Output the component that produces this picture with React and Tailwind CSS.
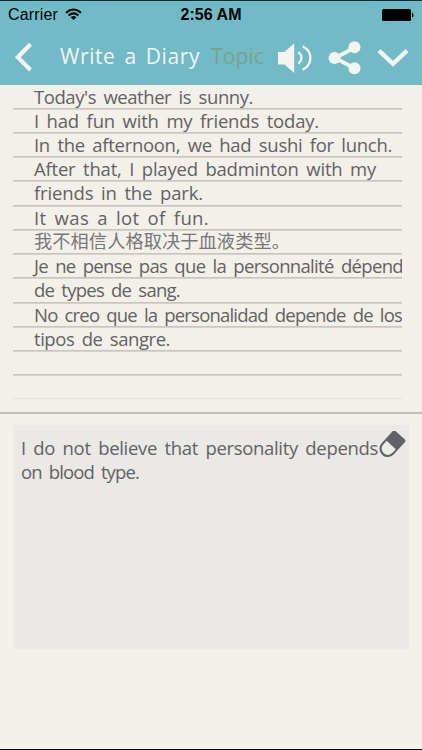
import { useLayoutEffect, useRef, useState } from "react";

// Spreads a line of handwriting over a given width by adjusting its tracking.
function Fit({ text, width, className = "" }) {
  const ref = useRef(null);
  const [spacing, setSpacing] = useState(0);
  useLayoutEffect(() => {
    const natural = ref.current.getBoundingClientRect().width;
    setSpacing((width - natural) / text.length);
  }, [text, width]);
  return (
    <span
      ref={ref}
      className={`inline-block whitespace-pre ${className}`}
      style={{ letterSpacing: `${spacing}px` }}
    >
      {text}
    </span>
  );
}

const diary = [
  ["Today's weather is sunny.", 219],
  ["I had fun with my friends today.", 285],
  ["In the afternoon, we had sushi for lunch.", 358],
  ["After that, I played badminton with my", 342],
  ["friends in the park.", 169],
  ["It was a lot of fun.", 175],
  ["我不相信人格取决于血液类型。", 256],
  ["Je ne pense pas que la personnalité dépend", 369],
  ["de types de sang.", 146],
  ["No creo que la personalidad depende de los", 368],
  ["tipos de sangre.", 136],
  ["", 0],
];

function StatusBar() {
  return (
    <div className="flex h-[29px] items-center justify-between border-t border-[#10282c] pl-2 pr-[8px] font-['Liberation_Sans',sans-serif] text-[16px] leading-none text-black">
      <div className="flex w-[173px] items-center gap-[7px]">
        <Fit text="Carrier" width={50} />
        <svg className="-mt-[2px]" width="17" height="13" viewBox="0 0 17 13" fill="none" stroke="black">
          <path d="M1 4.7Q8.5-1.6 16 4.7M3.6 7.4Q8.5 3.4 13.4 7.4" strokeWidth="2" />
          <path d="M5.7 9.2Q8.5 7 11.3 9.2L8.5 12Z" fill="black" stroke="none" />
        </svg>
      </div>
      <Fit text="2:56 AM" width={61} className="font-bold" />
      <div className="flex w-[173px] justify-end">
        <svg width="33" height="14" viewBox="0 0 33 14">
          <rect x="1" y="1" width="29" height="12" rx="1.5" />
          <path d="M31 4.5Q32.5 5 32.5 7T31 9.5Z" />
        </svg>
      </div>
    </div>
  );
}

function NavBar() {
  return (
    <div className="flex h-14 items-center text-[#f5f3ed]">
      <svg className="ml-[14px] shrink-0" width="20" height="30" viewBox="0 0 20 30" fill="none" stroke="currentColor" strokeWidth="4.2">
        <path d="M16.5 2.3 3.8 15.3l12.7 12.8" />
      </svg>
      <div className="ml-[26px] flex h-14 w-[218px] shrink-0 items-start gap-[11px] pt-[10px] text-[21px] leading-[34px] [word-spacing:3px]">
        <Fit text="Write a Diary" width={140} />
        <Fit text="Topic" width={53} className="text-[#7ca28b]" />
      </div>
      <svg className="mt-[2px] shrink-0" width="35" height="32" viewBox="0 0 35 32" fill="currentColor">
        <path d="M0 10h6.5L16.2 1.2V31L6.5 22.5H0Z" />
        <path d="M20.5 10.2Q26.5 16 20.5 21.8M24.6 4.2C35 9.5 35 22.5 24.6 27.8" fill="none" stroke="currentColor" strokeWidth="2.4" />
      </svg>
      <svg className="ml-[15px] mt-[2px] shrink-0" width="34" height="34" viewBox="0 0 34 34" fill="currentColor">
        <path d="M26 7 7 17 26 27" fill="none" stroke="currentColor" strokeWidth="3.8" />
        <circle cx="26.5" cy="6.3" r="6" />
        <circle cx="6.5" cy="17" r="6" />
        <circle cx="26.5" cy="27.3" r="6" />
      </svg>
      <svg className="ml-[15px] mt-[2px] shrink-0" width="32" height="22" viewBox="0 0 32 22" fill="none" stroke="currentColor" strokeWidth="4.4">
        <path d="M2 3.7 16 16.8 30 3.7" />
      </svg>
    </div>
  );
}

export default function App() {
  return (
    <div className="flex h-[750px] w-[422px] flex-col overflow-hidden border-b border-black bg-[#f3f0e9] font-['Open_Sans','Noto_Sans_CJK_SC',sans-serif] text-[#626264]">
      <header className="h-[85px] shrink-0 bg-[#70bbc5]">
        <StatusBar />
        <NavBar />
      </header>

      <section className="ml-[13px] h-[327px] w-[389px] shrink-0 overflow-hidden">
        {diary.map(([text, width], i) => (
          <div
            key={i}
            className={`border-b border-[#c8c5c0] pl-[21px] shadow-[0_1px_0_#d6d3cd] leading-[23px] [word-spacing:3px] ${
              i === 0 ? "h-[23.6px]" : "h-[24.25px]"
            } ${i === 6 ? "text-[18.2px] text-[#77777a]" : "text-[18.5px]"}`}
          >
            {text && <Fit text={text} width={width} />}
          </div>
        ))}
        <div className="h-[23.6px] border-b border-[#e5e2dc]" />
      </section>

      <div className="h-[1.5px] shrink-0 bg-[#c1bfbc]" />

      <section className="mx-[13px] mt-[11.5px] flex h-[224px] shrink-0 items-start bg-[#eae9e5] pl-[8px] pt-[11px] text-[18.5px] leading-[24px] [word-spacing:3px]">
        <div className="flex w-[357px] shrink-0 flex-col items-start">
          <Fit text="I do not believe that personality depends" width={357} />
          <Fit text="on blood type." width={118} />
        </div>
        <svg className="-mt-[5px] shrink-0" width="28" height="28" viewBox="0 0 28 28">
          <g transform="rotate(42 13.2 14)">
            <path d="M7 0.8h12.4a2 2 0 0 1 2 2V19.5a8 7.6 0 0 1-16.4 0V2.8a2 2 0 0 1 2-2Z" fill="#626266" />
            <path d="M7 14h12.4v5.3a6 5.6 0 0 1-12.4 0Z" fill="#edece8" />
          </g>
        </svg>
      </section>
    </div>
  );
}
